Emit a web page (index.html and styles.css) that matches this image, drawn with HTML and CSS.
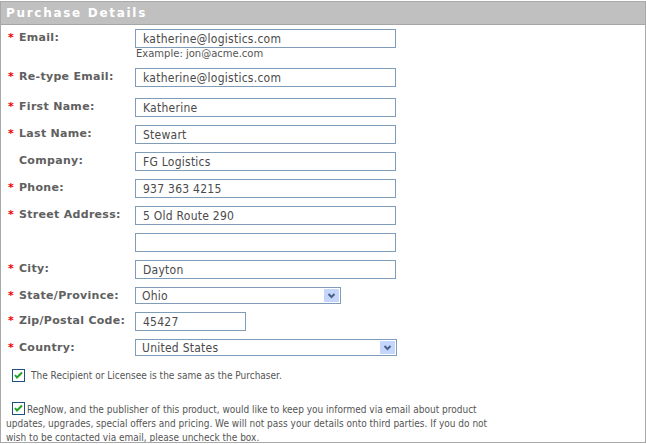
FILE: index.html
```html
<!DOCTYPE html>
<html lang="en">
<head>
    <meta charset="UTF-8">
    <title>Purchase Details</title>
    <link rel="stylesheet" href="styles.css">
</head>
<body>
    <div class="panel">
        <div class="panel-header">Purchase Details</div>
        <div class="panel-body">
            <div class="form-row row-email">
                <label class="field-label"><span class="req">*</span>Email:</label>
                <div class="field">
                    <input type="text" class="text-input" value="katherine@logistics.com">
                    <div class="hint">Example: jon@acme.com</div>
                </div>
            </div>
            <div class="form-row row-retype">
                <label class="field-label"><span class="req">*</span>Re-type Email:</label>
                <div class="field"><input type="text" class="text-input" value="katherine@logistics.com"></div>
            </div>
            <div class="form-row">
                <label class="field-label"><span class="req">*</span>First Name:</label>
                <div class="field"><input type="text" class="text-input" value="Katherine"></div>
            </div>
            <div class="form-row">
                <label class="field-label"><span class="req">*</span>Last Name:</label>
                <div class="field"><input type="text" class="text-input" value="Stewart"></div>
            </div>
            <div class="form-row">
                <label class="field-label"><span class="req"></span>Company:</label>
                <div class="field"><input type="text" class="text-input" value="FG Logistics"></div>
            </div>
            <div class="form-row">
                <label class="field-label"><span class="req">*</span>Phone:</label>
                <div class="field"><input type="text" class="text-input" value="937 363 4215"></div>
            </div>
            <div class="form-row">
                <label class="field-label"><span class="req">*</span>Street Address:</label>
                <div class="field"><input type="text" class="text-input" value="5 Old Route 290"></div>
            </div>
            <div class="form-row">
                <label class="field-label"></label>
                <div class="field"><input type="text" class="text-input" value=""></div>
            </div>
            <div class="form-row">
                <label class="field-label"><span class="req">*</span>City:</label>
                <div class="field"><input type="text" class="text-input" value="Dayton"></div>
            </div>
            <div class="form-row">
                <label class="field-label"><span class="req">*</span>State/Province:</label>
                <div class="field">
                    <div class="select-wrap select-state">
                        <select class="select-input"><option>Ohio</option></select>
                        <span class="select-btn">
                            <svg width="15" height="13" viewBox="0 0 15 13"><path d="M4.5 5 L7.5 8 L10.5 5" fill="none" stroke="#4d6185" stroke-width="2"/></svg>
                        </span>
                    </div>
                </div>
            </div>
            <div class="form-row">
                <label class="field-label"><span class="req">*</span>Zip/Postal Code:</label>
                <div class="field"><input type="text" class="text-input zip-input" value="45427"></div>
            </div>
            <div class="form-row">
                <label class="field-label"><span class="req">*</span>Country:</label>
                <div class="field">
                    <div class="select-wrap select-country">
                        <select class="select-input"><option>United States</option></select>
                        <span class="select-btn">
                            <svg width="15" height="13" viewBox="0 0 15 13"><path d="M4.5 5 L7.5 8 L10.5 5" fill="none" stroke="#4d6185" stroke-width="2"/></svg>
                        </span>
                    </div>
                </div>
            </div>

            <div class="check-row">
                <span class="checkbox">
                    <svg width="13" height="13" viewBox="0 0 13 13"><rect x="0.5" y="0.5" width="12" height="12" fill="#fff" stroke="#1c5180"/><path d="M3 6 L5 8.5 L10 3.5" fill="none" stroke="#21a121" stroke-width="2"/></svg>
                </span>
                <span class="check-text">The Recipient or Licensee is the same as the Purchaser.</span>
            </div>

            <p class="optin">
                <span class="checkbox inline">
                    <svg width="13" height="13" viewBox="0 0 13 13"><rect x="0.5" y="0.5" width="12" height="12" fill="#fff" stroke="#1c5180"/><path d="M3 6 L5 8.5 L10 3.5" fill="none" stroke="#21a121" stroke-width="2"/></svg>
                </span>RegNow, and the publisher of this product, would like to keep you informed via email about product updates, upgrades, special offers and pricing. We will not pass your details onto third parties. If you do not wish to be contacted via email, please uncheck the box.
            </p>
        </div>
    </div>
</body>
</html>
```

FILE: styles.css
```css
body {
    margin: 0;
    padding: 0;
    background: #fff;
    font-family: "DejaVu Sans Condensed", "DejaVu Sans", sans-serif;
    font-size: 10px;
    color: #555;
}
.panel {
    margin-top: 1px;
    width: 644px;
    height: 441px;
    border: 1px solid #a8a8a8;
    border-top: none;
    overflow: hidden;
}
.panel-header {
    height: 22px;
    line-height: 22px;
    background: #c0c0c0;
    border-top: 1px solid #aaa;
    border-bottom: 1px solid #a6a6a6;
    color: #fff;
    font-family: "DejaVu Sans", sans-serif;
    font-weight: bold;
    font-size: 12px;
    letter-spacing: 1.7px;
    padding-left: 5px;
}
.panel-body {
    padding-top: 4px;
}
.form-row {
    display: flex;
    margin-bottom: 8px;
}
.row-retype {
    margin-bottom: 11px;
}
.field-label {
    width: 134px;
    display: flex;
    padding-top: 2px;
    white-space: nowrap;
    font-family: "DejaVu Sans", sans-serif;
    font-weight: bold;
    font-size: 11px;
    letter-spacing: 0.3px;
    color: #606060;
}
.req {
    width: 11px;
    padding-left: 7px;
    letter-spacing: 0;
    color: #e00;
}
.text-input {
    box-sizing: border-box;
    width: 261px;
    height: 19px;
    margin: 0;
    border: 1px solid #7f9db9;
    padding: 0 0 0 7px;
    font-family: "DejaVu Sans Condensed", sans-serif;
    font-size: 12px;
    letter-spacing: 0.25px;
    color: #4a4a4a;
    outline: none;
}
.zip-input {
    width: 111px;
}
.hint {
    font-family: "DejaVu Sans", sans-serif;
    font-size: 10px;
    line-height: 12px;
    color: #555;
    padding-left: 1px;
}
.select-wrap {
    position: relative;
    height: 17px;
}
.select-state {
    width: 206px;
}
.select-country {
    width: 262px;
}
.select-input {
    -webkit-appearance: none;
    appearance: none;
    box-sizing: border-box;
    width: 100%;
    height: 17px;
    margin: 0;
    border: 1px solid #7f9db9;
    border-radius: 0;
    background: #fff;
    padding: 0 0 0 6px;
    font-family: "DejaVu Sans Condensed", sans-serif;
    font-size: 12px;
    letter-spacing: 0.25px;
    color: #4a4a4a;
    outline: none;
}
.select-btn {
    position: absolute;
    right: 2px;
    top: 2px;
    width: 15px;
    height: 13px;
    background: #c4d6fb;
    border-radius: 1px;
}
.select-btn svg {
    display: block;
}
.check-row {
    display: flex;
    align-items: center;
    padding-left: 11px;
    margin-top: 13px;
}
.checkbox svg {
    display: block;
}
.check-text {
    margin-left: 6px;
    color: #555;
}
.optin {
    width: 490px;
    margin: 20px 0 0 0;
    padding-left: 5px;
    line-height: 14px;
    color: #555;
}
.checkbox.inline {
    display: inline-block;
    vertical-align: -2px;
    margin-left: 6px;
    margin-right: 2px;
}
```
